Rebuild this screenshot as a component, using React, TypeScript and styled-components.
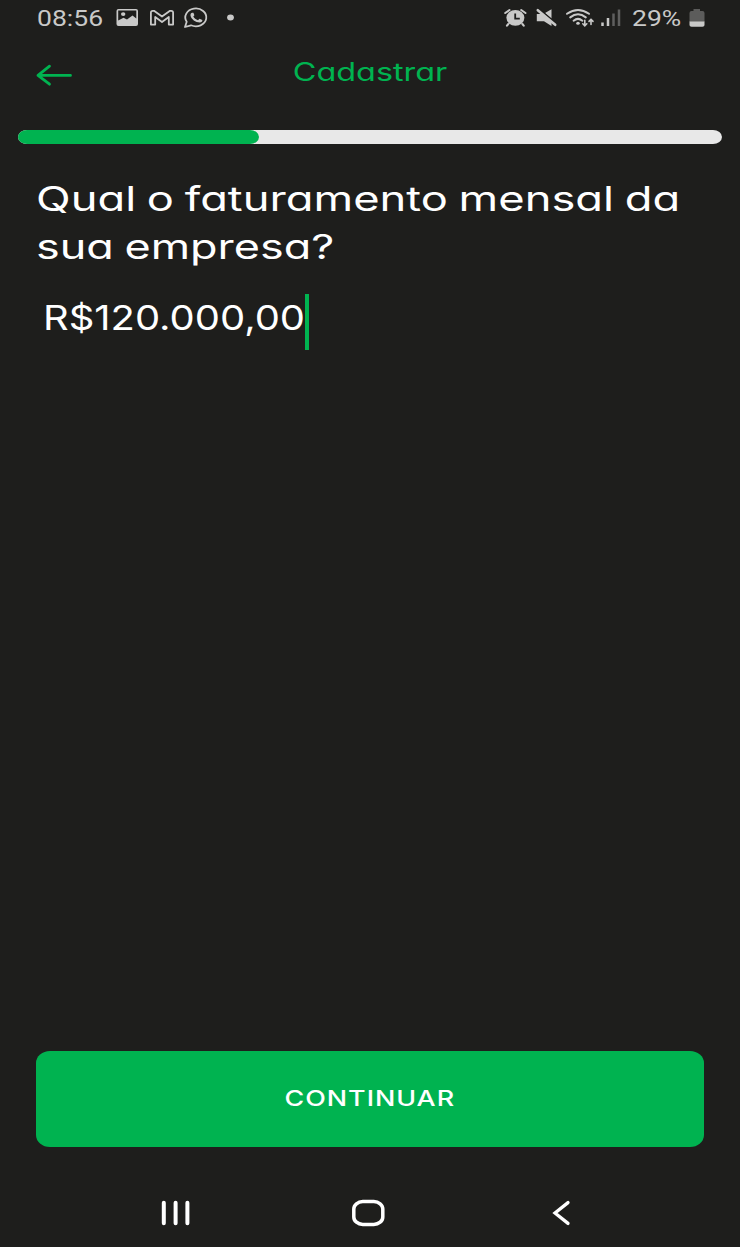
import React from "react";
import styled, { createGlobalStyle } from "styled-components";

const green = "#00b350";
const soft = "#c9c9c8";

const GlobalStyle = createGlobalStyle`
  * { box-sizing: border-box; }
  body { margin: 0; background: #1e1e1c; }
`;

const Screen = styled.main`
  display: flex;
  flex-direction: column;
  width: 740px;
  height: 1247px;
  overflow: hidden;
  background: #1e1e1c;
  color: #fff;
  font-family: Inter, "Liberation Sans", sans-serif;
  font-feature-settings: "cv11" 1, "calt" 0;
`;

const StatusBar = styled.header`
  display: flex;
  justify-content: space-between;
  height: 36px;
  padding: 0 35px 0 37px;
`;

const StatusGroup = styled.div`
  display: flex;
  align-items: center;
`;

const StatusText = styled.span<{ $width: number }>`
  width: ${(p) => p.$width}px;
  font: 400 22.5px/36px Roboto, sans-serif;
  color: ${soft};
  white-space: nowrap;
  transform: scaleX(1.18);
  transform-origin: left center;
`;

const Glyph = styled.svg<{ $gap?: number }>`
  display: block;
  flex: none;
  margin-left: ${(p) => p.$gap ?? 0}px;
  overflow: visible;
`;

const TopBar = styled.div`
  display: grid;
  grid-template-columns: 80px 1fr 80px;
  height: 94px;
  padding: 0 36px;
`;

const BackButton = styled.button`
  align-self: start;
  justify-self: start;
  margin-top: 28px;
  padding: 0;
  border: 0;
  background: none;
`;

const Title = styled.h1`
  margin: 14px 0 0;
  font-size: 25px;
  line-height: 45px;
  font-weight: 400;
  text-align: center;
  color: ${green};
  transform: scaleX(1.295);
`;

const Track = styled.div`
  height: 14px;
  margin: 0 18px;
  border-radius: 9px / 7px;
  background: #e8e8e8;
`;

const Progress = styled.div<{ $value: number }>`
  width: ${(p) => p.$value}%;
  height: 100%;
  border-radius: 9px / 7px;
  background: ${green};
`;

const Form = styled.section`
  flex: 1;
  padding: 32px 36px 0;
`;

const Question = styled.h2`
  margin: 0;
  font-size: 33.5px;
  line-height: 47.5px;
  font-weight: 400;
  word-spacing: -1.5px;
`;

const Line = styled.span<{ $scale: number }>`
  display: block;
  width: max-content;
  white-space: nowrap;
  transform: scaleX(${(p) => p.$scale});
  transform-origin: left center;
`;

const Field = styled.div`
  display: flex;
  height: 56px;
  margin-top: 23px;
  padding-left: 7px;
`;

const Amount = styled.span`
  width: 262px;
  font-size: 33.5px;
  line-height: 49px;
  white-space: nowrap;
  transform: scaleX(1.192);
  transform-origin: left center;
`;

const Caret = styled.span`
  width: 3.5px;
  height: 56px;
  background: ${green};
`;

const ContinueButton = styled.button`
  height: 96px;
  margin: 0 36px;
  padding: 0 0 3px;
  border: 0;
  border-radius: 14px / 12px;
  background: ${green};
  color: #fff;
  font: 500 22px Inter, sans-serif;
`;

const ButtonLabel = styled.span`
  display: inline-block;
  letter-spacing: 0.8px;
  transform: scaleX(1.222);
`;

const NavBar = styled.nav`
  display: flex;
  align-items: center;
  height: 100px;
  padding: 32px 170px 0 161px;
`;

export default function App() {
  return (
    <Screen>
      <GlobalStyle />
      <StatusBar>
        <StatusGroup>
          <StatusText $width={79}>08:56</StatusText>
          <Glyph width="23" height="18" viewBox="0 0 23 18">
            <path
              fillRule="evenodd"
              fill={soft}
              d="M2.5 0H20Q22 0 22 2V15Q22 17 20 17H2.5Q.5 17 .5 15V2Q.5 0 2.5 0ZM2.2 1.5V11.5L7.5 8.7L11 10.5L16.5 6.5L20.3 9.5V1.5ZM7.2 3.2A2.2 1.9 0 1 1 7.2 7A2.2 1.9 0 1 1 7.2 3.2Z"
            />
          </Glyph>
          <Glyph $gap={11} width="24" height="16" viewBox="0 0 24 16" fill="none" stroke={soft} strokeWidth="1.8" strokeLinejoin="round">
            <path d="M.9 2.8Q.8 .8 2.8 .8H4L12 6.6L20 .8H21.2Q23.2 .8 23.1 2.8V14.6H18.8V7L12 12L5.2 7V14.6H.9Z" />
          </Glyph>
          <Glyph $gap={10} width="24" height="20" viewBox="0 0 24 20">
            <path fill="none" stroke={soft} strokeWidth="1.8" strokeLinejoin="round" d="M1 19L2.7 13.8A10.5 8.9 0 1 1 7 17.3Z" />
            <path fill={soft} d="M8.2 4.8C7.2 5 6.3 6 6.5 7.4C7.2 11.2 11.5 14.3 15.8 14.4C17.4 14.2 18.5 13.2 18.4 11.9L15.5 10.7L14 12.2C11.8 11.4 10.3 10.2 9.3 8.5L10.4 7.3L9.4 4.8Z" />
          </Glyph>
          <Glyph $gap={18.5} width="7" height="6" viewBox="0 0 7 6">
            <ellipse cx="3.5" cy="2.5" rx="3.4" ry="2.9" fill={soft} />
          </Glyph>
        </StatusGroup>
        <StatusGroup>
          <Glyph width="23" height="18" viewBox="0 0 23 18">
            <path fill="none" stroke={soft} strokeWidth="2.1" strokeLinecap="round" d="M1.2 4L5.5 1M21.5 4L17.2 1M4.3 15L3 16.6M18.4 15L19.7 16.6" />
            <ellipse cx="11.4" cy="8.8" rx="9" ry="7.9" fill={soft} />
            <path d="M11.2 4.5V9.7H15.8" fill="none" stroke="#1e1e1c" strokeWidth="1.8" />
          </Glyph>
          <Glyph $gap={9} width="21" height="18" viewBox="0 0 21 18">
            <path fill={soft} d="M.8 5H6L15.5 13V17L8 12.2H.8ZM9 4L15.5 .2V9.5Z" />
            <path d="M3.8 .6L20 14.2" stroke="#1e1e1c" strokeWidth="1.4" />
            <path d="M1.8 1.2L19.2 15.8" stroke={soft} strokeWidth="2.6" strokeLinecap="round" />
          </Glyph>
          <Glyph $gap={9} width="28" height="19" viewBox="0 0 28 19" fill="none" stroke={soft} strokeWidth="2" strokeLinecap="round">
            <path d="M1 4.8Q12 -3 23 4.8M4.2 8.4Q12 2.2 19.8 8.4M7.6 11.7Q12 8 16.4 11.7" />
            <ellipse cx="12" cy="14.2" rx="1.8" ry="1.5" fill={soft} stroke="none" />
            <path strokeWidth="1.6" d="M18.8 11.2V16.5M16.8 14.8L18.8 16.8L20.8 14.8M25 15.5V10.5M23 12.4L25 10.3L27 12.4" />
          </Glyph>
          <Glyph $gap={7} width="19" height="18" viewBox="0 0 19 18">
            <path d="M1.5 13.5V17M7 9V17" stroke={soft} strokeWidth="2.5" />
            <path d="M12.5 4.5V17M18 .5V17" stroke="#5f5f5e" strokeWidth="2.5" />
          </Glyph>
          <Glyph $gap={12} width="0" height="1" />
          <StatusText $width={57}>29%</StatusText>
          <Glyph width="16" height="18" viewBox="0 0 16 18">
            <path fill="#5c5c5b" d="M4.5 0H11V2H13.5Q15.5 2 15.5 4V13H.5V4Q.5 2 2.5 2H4.5Z" />
            <path fill={soft} d="M.5 12.5H15.5V16Q15.5 17.8 13.5 17.8H2.5Q.5 17.8 .5 16Z" />
          </Glyph>
        </StatusGroup>
      </StatusBar>

      <TopBar>
        <BackButton aria-label="Voltar">
          <Glyph width="37" height="22" viewBox="0 0 37 22" fill="none" stroke={green} strokeWidth="2.8" strokeLinecap="round" strokeLinejoin="round">
            <path d="M34.5 11.4H2M13.5 2.2L2 11.4L13.5 20.2" />
          </Glyph>
        </BackButton>
        <Title>Cadastrar</Title>
      </TopBar>

      <Track>
        <Progress $value={34.3} />
      </Track>

      <Form>
        <Question>
          <Line $scale={1.352}>Qual o faturamento mensal da</Line>
          <Line $scale={1.342}>sua empresa?</Line>
        </Question>
        <Field>
          <Amount>R$120.000,00</Amount>
          <Caret />
        </Field>
      </Form>

      <ContinueButton>
        <ButtonLabel>CONTINUAR</ButtonLabel>
      </ContinueButton>

      <NavBar>
        <Glyph width="28" height="26" viewBox="0 0 28 26" stroke="#fff" strokeWidth="4" strokeLinecap="round">
          <path d="M2.8 2.8V23.2M14.6 2.8V23.2M26.4 2.8V23.2" />
        </Glyph>
        <Glyph $gap={163} width="32" height="26" viewBox="0 0 32 26">
          <rect x="1.8" y="1.6" width="29" height="22.8" rx="9" ry="7.5" fill="none" stroke="#fff" strokeWidth="3.5" />
        </Glyph>
        <Glyph $gap={168} width="18" height="26" viewBox="0 0 18 26" fill="none" stroke="#fff" strokeWidth="3.3" strokeLinecap="round" strokeLinejoin="miter">
          <path d="M16 2.6L3 13L16 23.4" />
        </Glyph>
      </NavBar>
    </Screen>
  );
}
